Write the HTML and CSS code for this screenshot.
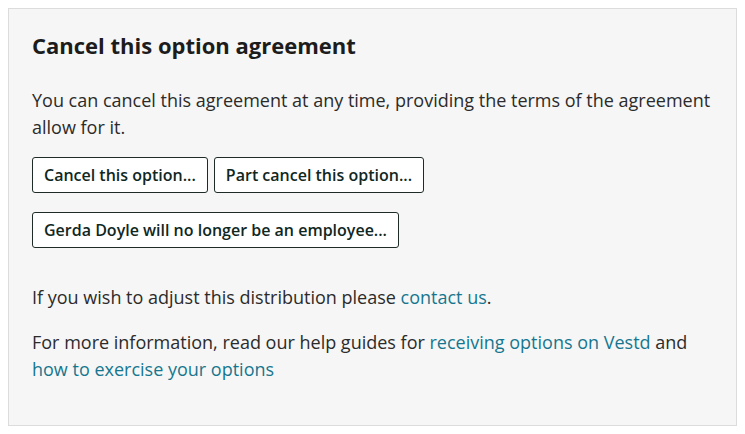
FILE: index.html
```html
<!DOCTYPE html>
<html>
<head>
  <meta charset="UTF-8">
  <title>Cancel this option agreement</title>
  <link rel="stylesheet" href="styles.css">
</head>
<body>
  <div class="panel">
    <h2>Cancel this option agreement</h2>
    <p class="lead">You can cancel this agreement at any time, providing the terms of the agreement allow for it.</p>
    <div class="actions">
      <button>Cancel this option...</button>
      <button>Part cancel this option...</button>
    </div>
    <div class="actions">
      <button>Gerda Doyle will no longer be an employee...</button>
    </div>
    <p class="note">If you wish to adjust this distribution please <a href="#">contact us</a>.</p>
    <p class="note">For more information, read our help guides for <a href="#">receiving options on Vestd</a> and <a href="#">how to exercise your options</a></p>
  </div>
</body>
</html>
```

FILE: styles.css
```css
* {
  font-family: "Open Sans", sans-serif;
}

body {
  margin: 8px;
  background: #fff;
}

.panel {
  background-color: #f6f6f6;
  border: 1px solid #dcdcdc;
  padding: 22px 23px 42px;
  color: #2b2b2b;
}

h2 {
  margin: 0 0 28px;
  font-size: 22px;
  font-weight: 700;
  color: #1c1c1c;
  line-height: 28px;
}

p {
  margin: 0;
  font-size: 18px;
  line-height: 27px;
}

.lead {
  margin-bottom: 16px;
}

.actions {
  display: flex;
  gap: 6px;
  margin-bottom: 19px;
}

button {
  padding: 0 11px;
  height: 36px;
  font-size: 16px;
  font-weight: 600;
  color: #10271f;
  background-color: #fff;
  border: 1px solid #1f2b27;
  border-radius: 3px;
  cursor: pointer;
}

.actions + .note {
  margin-top: 36px;
}

.note {
  margin-bottom: 18px;
}

.note:last-child {
  margin-bottom: 0;
}

a {
  color: #17768f;
  text-decoration: none;
}
```
